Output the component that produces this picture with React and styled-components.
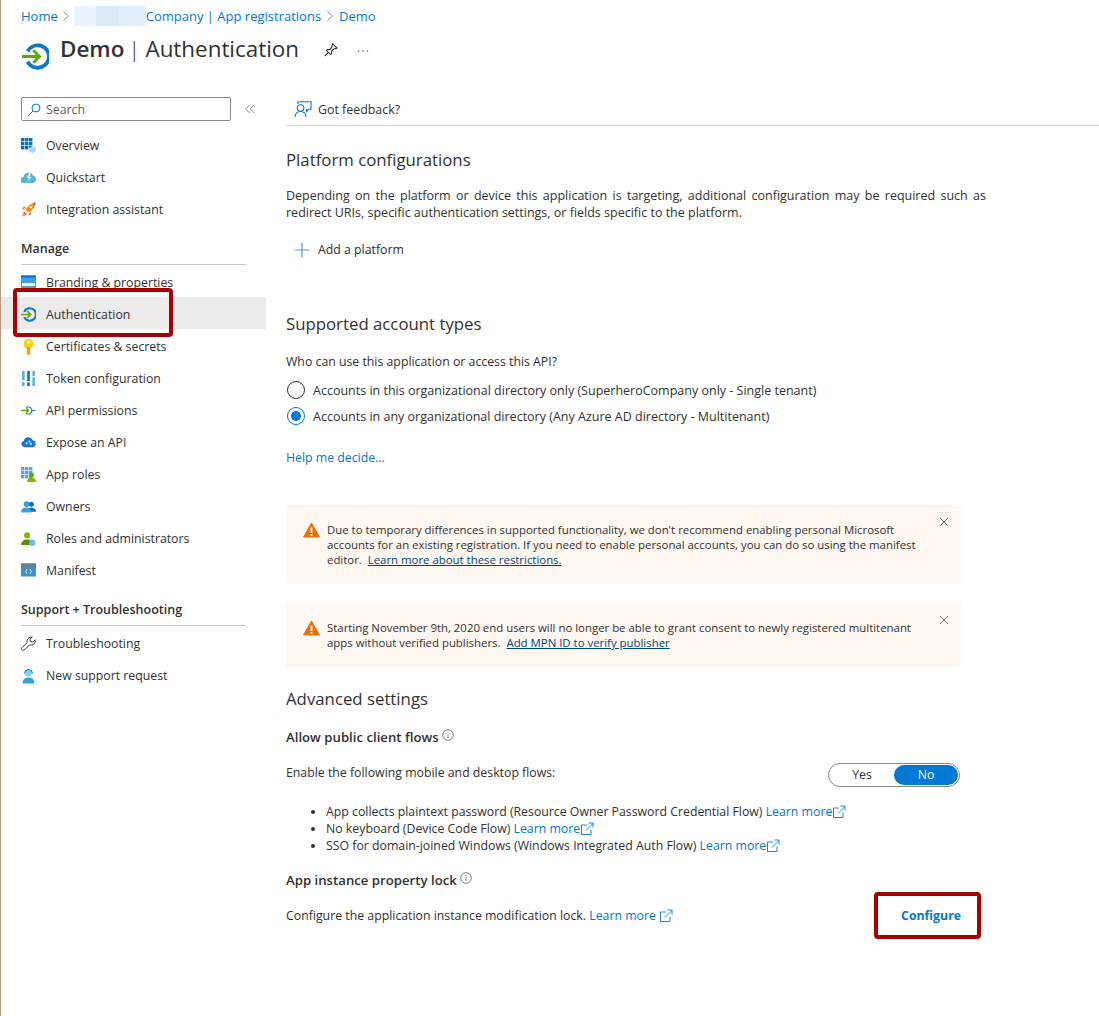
import React from "react";
import styled, { createGlobalStyle } from "styled-components";

const GlobalStyle = createGlobalStyle`
  html, body { margin: 0; padding: 0; background: #fff; }
  body {
    font-family: "Open Sans", "Noto Sans", sans-serif;
    font-size: 12.3px;
    color: #323130;
  }
`;

const Page = styled.div`
  position: relative;
  width: 1099px;
  height: 1016px;
  overflow: hidden;
  box-sizing: border-box;
  border-left: 1px solid #b99b7c;
`;

/* header */
const Header = styled.header`
  height: 97px;
  padding: 0 0 0 20px;
  box-sizing: border-box;
`;
const Crumbs = styled.nav`
  display: flex;
  align-items: center;
  height: 17px;
  padding-top: 7px;
  color: #0078d4;
  font-size: 13px;
`;
const CrumbSep = styled.span`
  display: inline-flex;
  color: #8a8886;
  margin: 0 ${(p) => p.$gap}px;
`;
const Blur = styled.span`
  display: inline-block;
  width: 72px;
  height: 20px;
  background: linear-gradient(90deg, #eaf3fb 0 30%, #dcebf8 30% 62%, #e3effa 62% 100%);
`;
const TitleRow = styled.div`
  display: flex;
  align-items: flex-start;
  margin-top: 9px;
`;
const LogoWrap = styled.span`
  display: inline-flex;
  margin: 10px 0 0 1px;
`;
const Title = styled.h1`
  margin: 0 0 0 11px;
  font-size: 22.4px;
  line-height: 32px;
  font-weight: 400;
  color: #323130;
  b { font-weight: 600; }
  i { font-style: normal; color: #323130; margin: 0 5px 0 4px; font-weight: 300; }
`;
const TitleAction = styled.span`
  display: inline-flex;
  margin: ${(p) => p.$drop}px 0 0 ${(p) => p.$gap}px;
  color: #323130;
`;

const Body = styled.div`
  display: flex;
`;

/* sidebar */
const Sidebar = styled.aside`
  width: 265px;
  flex: none;
`;
const SearchRow = styled.div`
  display: flex;
  align-items: center;
  height: 24px;
  padding-left: 20px;
  margin-bottom: 8px;
`;
const SearchBox = styled.div`
  display: flex;
  align-items: center;
  width: 210px;
  height: 24px;
  box-sizing: border-box;
  border: 1px solid #8a8886;
  border-radius: 2px;
  padding-left: 6px;
  gap: 5px;
  color: #605e5c;
`;
const Collapse = styled.span`
  display: inline-flex;
  margin-left: 14px;
  color: #8a8886;
`;
const NavRow = styled.div`
  display: flex;
  align-items: center;
  height: 32px;
  padding-left: 20px;
  background: ${(p) => (p.$active ? "#edebe9" : "transparent")};
`;
const ManageList = styled.div`
  ${NavRow} {
    box-sizing: border-box;
    padding-top: 2px;
  }
`;
const NavIcon = styled.span`
  display: inline-flex;
  width: 15px;
  height: 15px;
  margin-right: 10px;
`;
const NavGroup = styled.div`
  margin: ${(p) => p.$top}px 20px ${(p) => p.$after}px 20px;
  height: 33px;
  box-sizing: border-box;
  padding-top: 8px;
  border-bottom: 1px solid #c8c6c4;
  font-weight: 600;
  font-size: 12.5px;
`;

/* main column */
const Main = styled.main`
  flex: 1;
  padding-left: 20px;
  min-width: 0;
`;
const Toolbar = styled.div`
  display: flex;
  align-items: center;
  height: 30px;
  margin-top: -1px;
  padding: 0 0 2px 8px;
  box-sizing: border-box;
  gap: 6px;
  font-size: 12.4px;
  border-bottom: 1px solid #d2d0ce;
`;
const Heading = styled.h2`
  margin: ${(p) => p.$top}px 0 0;
  font-size: 16.8px;
  line-height: 22px;
  font-weight: 400;
  color: #323130;
`;
const Para = styled.p`
  margin: ${(p) => p.$top}px 0 0;
  width: 700px;
  font-size: 12.5px;
  line-height: 17px;
  text-align: justify;
`;
const Line = styled.div`
  display: flex;
  align-items: center;
  margin-top: ${(p) => p.$top}px;
  line-height: 17px;
`;
const AddButton = styled(Line)`
  margin-left: 8px;
  gap: 8px;
`;
const RadioItem = styled(Line)`
  gap: 9px;
  height: 20px;
  font-size: 12.5px;
`;
const Radio = styled.span`
  width: 18px;
  height: 18px;
  box-sizing: border-box;
  border-radius: 50%;
  border: 1px solid ${(p) => (p.$on ? "#0078d4" : "#323130")};
  display: inline-flex;
  align-items: center;
  justify-content: center;
  margin-left: 1px;
  margin-right: -1px;
  &::after {
    content: "";
    display: ${(p) => (p.$on ? "block" : "none")};
    width: 10px;
    height: 10px;
    border-radius: 50%;
    background: #0078d4;
  }
`;
const Link = styled.a`
  color: #0078d4;
`;
const Banner = styled.div`
  display: flex;
  width: 675px;
  height: ${(p) => p.$h}px;
  margin-top: ${(p) => p.$top}px;
  box-sizing: border-box;
  padding: 17px 12px 0 17px;
  background: #fff7f2;
  border-radius: 2px;
  font-size: 11.4px;
  line-height: 15px;
`;
const BannerText = styled.div`
  flex: 1;
  margin-left: 7px;
`;
const BannerLine = styled.div`
  white-space: nowrap;
`;
const BannerLink = styled.a`
  color: #004578;
  text-decoration: underline;
  margin-left: 3px;
`;
const Close = styled.span`
  display: inline-flex;
  color: #605e5c;
  margin-top: -5px;
`;
const SubHeading = styled.div`
  display: flex;
  align-items: flex-start;
  gap: 3px;
  margin-top: ${(p) => p.$top}px;
  font-weight: 600;
  font-size: 13.2px;
  line-height: 17px;
`;
const Between = styled.div`
  display: flex;
  align-items: center;
  justify-content: space-between;
  width: ${(p) => p.$w}px;
  height: ${(p) => p.$h}px;
  margin-top: ${(p) => p.$top}px;
  svg { vertical-align: -3px; }
`;
const RaisedText = styled.span`
  margin-bottom: 6px;
`;
const Toggle = styled.div`
  display: flex;
  align-items: center;
  width: 132px;
  height: 24px;
  box-sizing: border-box;
  border: 1px solid #8a8886;
  border-radius: 12px;
  padding: 1px;
`;
const ToggleSide = styled.span`
  flex: 1;
  height: 20px;
  line-height: 20px;
  text-align: center;
  border-radius: 10px;
  background: ${(p) => (p.$on ? "#0078d4" : "transparent")};
  color: ${(p) => (p.$on ? "#fff" : "#323130")};
`;
const Bullets = styled.ul`
  margin: ${(p) => p.$top}px 0 0;
  padding: 0 0 0 40px;
  line-height: 17px;
  li svg { vertical-align: -3px; }
`;
const ConfigureLabel = styled.span`
  color: #0078d4;
  font-weight: 700;
`;

/* annotation boxes drawn over the screenshot */
const Mark = styled.div`
  position: absolute;
  left: ${(p) => p.$x}px;
  top: ${(p) => p.$y}px;
  width: ${(p) => p.$w}px;
  height: ${(p) => p.$h}px;
  box-sizing: border-box;
  border: 4px solid #a80000;
  border-radius: 4px;
`;

const Logo = ({ size = 15 }) => (
  <svg width={size} height={size} viewBox="0 0 24 24" fill="none">
    <path d="M5 7.500A10 10 0 1 1 5 16.500" stroke="#0f78c4" strokeWidth="3.400" />
    <path d="M0 12h15M10 6.500l5.500 5.500-5.500 5.500" stroke="#5ea80d" strokeWidth="2.600" />
  </svg>
);
const Chevron = () => (
  <svg width="8" height="12" viewBox="0 0 8 12" fill="none" stroke="currentColor">
    <path d="M1.500 1.500 6.500 6l-5 4.500" />
  </svg>
);
const Pin = () => (
  <svg width="16" height="16" viewBox="0 0 16 16" fill="none" stroke="currentColor" strokeWidth="1.100">
    <path d="M9.800 1.800 14 6l-1 .6-2 .1-2.300 2.400-.2 2.600-1 .9-4-4 .9-1 2.600-.2L9 5.100l.1-2zM5 10.800 1.800 14" />
  </svg>
);
const Dots = () => (
  <svg width="12" height="12" viewBox="0 0 12 12" fill="#605e5c">
    <circle cx="1.500" cy="5" r="0.800" />
    <circle cx="6" cy="5" r="0.800" />
    <circle cx="10.500" cy="5" r="0.800" />
  </svg>
);
const SearchIcon = () => (
  <svg width="13" height="13" viewBox="0 0 13 13" fill="none" stroke="#0078d4">
    <circle cx="8" cy="5" r="4" />
    <path d="M5 8 .8 12.200" />
  </svg>
);
const DoubleLeft = () => (
  <svg width="10" height="10" viewBox="0 0 10 10" fill="none" stroke="currentColor">
    <path d="M4.500 1 .8 5l3.700 4M9 1 5.300 5 9 9" />
  </svg>
);
const Feedback = () => (
  <svg width="18" height="17" viewBox="0 0 18 17" fill="none" stroke="#0078d4" strokeWidth="1.100">
    <circle cx="6.500" cy="7" r="3.300" />
    <path d="M1 16c.3-3.500 2.400-5.500 5.500-5.500S11.700 12.500 12 16M4 3V.8h13v7.500h-2.500L12.500 10.500V8" />
  </svg>
);
const Plus = () => (
  <svg width="16" height="16" viewBox="0 0 16 16" stroke="#4f9fdc" strokeWidth="1.200">
    <path d="M8 .5v15M.5 8h15" />
  </svg>
);
const Warn = () => (
  <svg width="17" height="16" viewBox="0 0 17 16" style={{ flex: "none" }}>
    <path d="M8.500 1 16.500 15H.5z" fill="#e3730b" stroke="#e3730b" strokeLinejoin="round" />
    <path d="M7.600 5.500h1.800v5.500H7.600zM7.600 12h1.800v1.800H7.600z" fill="#fff" />
  </svg>
);
const Cross = () => (
  <svg width="10" height="10" viewBox="0 0 10 10" stroke="currentColor" strokeWidth="0.900">
    <path d="M1 1l8 8M9 1 1 9" />
  </svg>
);
const Info = () => (
  <svg width="12" height="12" viewBox="0 0 12 12" fill="none" stroke="#605e5c" strokeWidth="0.800">
    <circle cx="6" cy="6" r="5.300" />
    <path d="M6 5.200V9M6 3v1" />
  </svg>
);
const External = () => (
  <svg width="14" height="14" viewBox="0 0 14 14" fill="none" stroke="#0078d4" strokeWidth="0.900">
    <path d="M7 3H1.500v9.500H11V7.500M6 8.500 13 1.500M8.500 1H13v4.500" />
  </svg>
);

const Grid = ({ a = "#0f6cbd", person }) => (
  <svg width="15" height="15" viewBox="0 0 15 15">
    {[0, 4, 8].flatMap((y) =>
      [0, 4, 8].map((x) => <rect key={`${x}-${y}`} x={x} y={y} width="3.400" height="3.400" fill={a} />)
    )}
    {person ? (
      <>
        <circle cx="10.500" cy="8" r="2.500" fill="#5ea80d" />
        <path d="M6 15c0-3 2-4.500 4.500-4.500S15 12 15 15z" fill="#7fba00" />
      </>
    ) : (
      <path d="M8 10l3.500-2 3.500 2v3.500L11.500 15 8 13.500z" fill="#a6d8f5" />
    )}
  </svg>
);
const Quick = () => (
  <svg width="15" height="15" viewBox="0 0 15 15">
    <path d="M3 13a3 3 0 0 1-.5-6A5 5 0 0 1 12 5.500 3.800 3.800 0 0 1 11.500 13z" fill="#59b4d9" />
    <path d="M8.500 2.500 6 8h2l-1 3.500L10.500 7H8.500l1.500-4.500z" fill="#fff" />
  </svg>
);
const Rocket = () => (
  <svg width="15" height="15" viewBox="0 0 15 15">
    <path d="M4.500 7.500C7 3.500 10.500 1 14.800.2 14.500 4.500 12 8 7.500 10.500z" fill="#ff8c00" />
    <path d="M11.500 1.300 14.800.2l-1 3.300z" fill="#3a96dd" />
    <circle cx="9.800" cy="5.200" r="1.200" fill="#fff2cc" />
    <path d="M5 6 1 7.500l2-3zM9 10l-1.500 4 3-2.500zM1 14.500l2-5 3 3z" fill="#f25022" />
    <path d="M1 14.500l1.700-3 1.200 1.300z" fill="#fcd116" />
  </svg>
);
const Branding = () => (
  <svg width="15" height="15" viewBox="0 0 15 15">
    <rect y="0.500" width="15" height="13" fill="#3aa0e6" />
    <rect y="0.500" width="15" height="2" fill="#0f6cbd" />
    <rect x="1" y="8" width="13" height="3" fill="#fff" />
  </svg>
);
const Key = () => (
  <svg width="15" height="17" viewBox="0 0 15 17">
    <circle cx="7.500" cy="5" r="5" fill="#fcd116" />
    <path d="M5.800 8h3.400v6.500L7.500 16.800 5.800 14.500z" fill="#f6a800" />
    <circle cx="7.500" cy="3.200" r="1.100" fill="#fff" />
  </svg>
);
const Token = () => (
  <svg width="15" height="15" viewBox="0 0 15 15">
    <rect x="1" width="2.600" height="15" fill="#59b4d9" />
    <rect x="6.200" width="2.600" height="15" fill="#0f6cbd" />
    <rect x="11.400" width="2.600" height="15" fill="#59b4d9" />
    <rect x="1" y="9" width="2.600" height="2" fill="#fff" />
    <rect x="6.200" y="10" width="2.600" height="1.500" fill="#fff" />
    <rect x="11.400" y="5" width="2.600" height="1.500" fill="#fff" />
  </svg>
);
const Api = () => (
  <svg width="17" height="15" viewBox="0 0 17 15" fill="none">
    <path d="M0 7.500h8M6 5l2.500 2.500L6 10" stroke="#5ea80d" strokeWidth="1.500" />
    <path d="M11.500 7.500h5.500" stroke="#3a8f9e" strokeWidth="1.200" />
    <path d="M6 4.300a4 4 0 1 1 0 6.400" stroke="#2a8fb8" strokeWidth="1.400" />
  </svg>
);
const Cloud = () => (
  <svg width="16" height="15" viewBox="0 0 16 15">
    <path d="M3.500 12.500a3.300 3.300 0 0 1-.5-6.500 5 5 0 0 1 9.500-1 3.800 3.800 0 0 1 0 7.500z" fill="#1a73d8" />
    <circle cx="6" cy="8.500" r="1.200" fill="#cfe6fa" />
    <circle cx="9" cy="6.500" r="1.200" fill="#cfe6fa" />
    <circle cx="10.500" cy="9" r="1.200" fill="#cfe6fa" />
  </svg>
);
const Owners = () => (
  <svg width="16" height="15" viewBox="0 0 16 15">
    <circle cx="11" cy="5" r="2.700" fill="#0f6cbd" />
    <path d="M7 13c0-3 2-4.500 4-4.500s5 1.500 5 4.500z" fill="#0f6cbd" />
    <circle cx="6" cy="5" r="3" fill="#3aa0e6" />
    <path d="M0 14c0-4 2.500-5.500 5.500-5.500S11 10 11 14z" fill="#3aa0e6" />
  </svg>
);
const Roles = () => (
  <svg width="16" height="16" viewBox="0 0 16 16">
    <circle cx="6.500" cy="4" r="3.300" fill="#7fba00" />
    <path d="M0 14.500c0-4 3-6 6.500-6s6 2 6 6z" fill="#5e8c0a" />
    <circle cx="12" cy="12" r="3.400" fill="#6cc0ee" />
  </svg>
);
const Manifest = () => (
  <svg width="15" height="15" viewBox="0 0 15 15">
    <rect y="0.500" width="15" height="13" fill="#3f8fc9" />
    <rect y="0.500" width="15" height="3" fill="#7a7a7a" />
    <path d="M6 6 4.800 8.500 6 11M9 6l1.200 2.500L9 11" stroke="#fff" strokeWidth="0.800" fill="none" />
  </svg>
);
const Wrench = () => (
  <svg width="16" height="16" viewBox="0 0 16 16" fill="none" stroke="#323130">
    <path d="M15 3.500 12.500 6l-2.500-.5L9.500 3 12 .8A4.500 4.500 0 0 0 6.500 6.500L1 12c-1.500 1.500.8 3.800 2.300 2.300L9 9a4.500 4.500 0 0 0 6-5.500z" />
  </svg>
);
const Support = () => (
  <svg width="15" height="16" viewBox="0 0 15 16">
    <path d="M1.500 15.500c0-4 2.500-6 6-6s6 2 6 6z" fill="#2da7d9" />
    <circle cx="7.500" cy="5" r="3.400" fill="#7fd2f2" />
    <path d="M3.500 5.500a4 4 0 0 1 8 0" fill="none" stroke="#0f6cbd" />
  </svg>
);

const manage = [
  ["Branding & properties", <Branding />],
  ["Authentication", <Logo />],
  ["Certificates & secrets", <Key />],
  ["Token configuration", <Token />],
  ["API permissions", <Api />],
  ["Expose an API", <Cloud />],
  ["App roles", <Grid a="#5ea0ef" person />],
  ["Owners", <Owners />],
  ["Roles and administrators", <Roles />],
  ["Manifest", <Manifest />],
];

function Item({ icon, children, active }) {
  return (
    <NavRow $active={active}>
      <NavIcon>{icon}</NavIcon>
      {children}
    </NavRow>
  );
}

function App() {
  return (
    <Page>
      <GlobalStyle />
      <Header>
        <Crumbs>
          Home
          <CrumbSep $gap={4}>
            <Chevron />
          </CrumbSep>
          <Blur />
          Company | App registrations
          <CrumbSep $gap={5}>
            <Chevron />
          </CrumbSep>
          Demo
        </Crumbs>
        <TitleRow>
          <LogoWrap>
            <Logo size={27} />
          </LogoWrap>
          <Title>
            <b>Demo</b>
            <i>|</i>Authentication
          </Title>
          <TitleAction $gap={24} $drop={9}>
            <Pin />
          </TitleAction>
          <TitleAction $gap={18} $drop={13}>
            <Dots />
          </TitleAction>
        </TitleRow>
      </Header>
      <Body>
        <Sidebar>
          <SearchRow>
            <SearchBox>
              <SearchIcon />
              Search
            </SearchBox>
            <Collapse>
              <DoubleLeft />
            </Collapse>
          </SearchRow>
          <Item icon={<Grid />}>Overview</Item>
          <Item icon={<Quick />}>Quickstart</Item>
          <Item icon={<Rocket />}>Integration assistant</Item>
          <NavGroup $top={7} $after={0}>
            Manage
          </NavGroup>
          <ManageList>
            {manage.map(([label, icon]) => (
              <Item key={label} icon={icon} active={label === "Authentication"}>
                {label}
              </Item>
            ))}
          </ManageList>
          <NavGroup $top={8} $after={1}>
            Support + Troubleshooting
          </NavGroup>
          <Item icon={<Wrench />}>Troubleshooting</Item>
          <Item icon={<Support />}>New support request</Item>
        </Sidebar>
        <Main>
          <Toolbar>
            <Feedback />
            Got feedback?
          </Toolbar>
          <Heading $top={23}>Platform configurations</Heading>
          <Para $top={16}>
            Depending on the platform or device this application is targeting, additional configuration may be required
            such as redirect URIs, specific authentication settings, or fields specific to the platform.
          </Para>
          <AddButton $top={20}>
            <Plus />
            Add a platform
          </AddButton>
          <Heading $top={55}>Supported account types</Heading>
          <Line $top={18}>Who can use this application or access this API?</Line>
          <RadioItem $top={10}>
            <Radio />
            Accounts in this organizational directory only (SuperheroCompany only - Single tenant)
          </RadioItem>
          <RadioItem $top={6}>
            <Radio $on />
            Accounts in any organizational directory (Any Azure AD directory - Multitenant)
          </RadioItem>
          <Line $top={23}>
            <Link>Help me decide...</Link>
          </Line>
          <Banner $top={39} $h={79}>
            <Warn />
            <BannerText>
              <BannerLine>
                Due to temporary differences in supported functionality, we don't recommend enabling personal Microsoft
              </BannerLine>
              <BannerLine>
                accounts for an existing registration. If you need to enable personal accounts, you can do so using the
                manifest
              </BannerLine>
              <BannerLine>
                editor. <BannerLink>Learn more about these restrictions.</BannerLink>
              </BannerLine>
            </BannerText>
            <Close>
              <Cross />
            </Close>
          </Banner>
          <Banner $top={19} $h={64}>
            <Warn />
            <BannerText>
              <BannerLine>
                Starting November 9th, 2020 end users will no longer be able to grant consent to newly registered
                multitenant
              </BannerLine>
              <BannerLine>
                apps without verified publishers. <BannerLink>Add MPN ID to verify publisher</BannerLink>
              </BannerLine>
            </BannerText>
            <Close>
              <Cross />
            </Close>
          </Banner>
          <Heading $top={21}>Advanced settings</Heading>
          <SubHeading $top={19}>
            Allow public client flows <Info />
          </SubHeading>
          <Between $w={674} $h={24} $top={17}>
            <RaisedText>Enable the following mobile and desktop flows:</RaisedText>
            <Toggle>
              <ToggleSide>Yes</ToggleSide>
              <ToggleSide $on>No</ToggleSide>
            </Toggle>
          </Between>
          <Bullets $top={16}>
            <li>
              App collects plaintext password (Resource Owner Password Credential Flow) <Link>Learn more</Link>
              <External />
            </li>
            <li>
              No keyboard (Device Code Flow) <Link>Learn more</Link>
              <External />
            </li>
            <li>
              SSO for domain-joined Windows (Windows Integrated Auth Flow) <Link>Learn more</Link>
              <External />
            </li>
          </Bullets>
          <SubHeading $top={18}>
            App instance property lock <Info />
          </SubHeading>
          <Between $w={675} $h={24} $top={14}>
            <span>
              Configure the application instance modification lock. <Link>Learn more</Link> <External />
            </span>
            <ConfigureLabel>Configure</ConfigureLabel>
          </Between>
        </Main>
      </Body>
      <Mark $x={12} $y={288} $w={160} $h={49} />
      <Mark $x={873} $y={892} $w={107} $h={47} />
    </Page>
  );
}

export default App;
